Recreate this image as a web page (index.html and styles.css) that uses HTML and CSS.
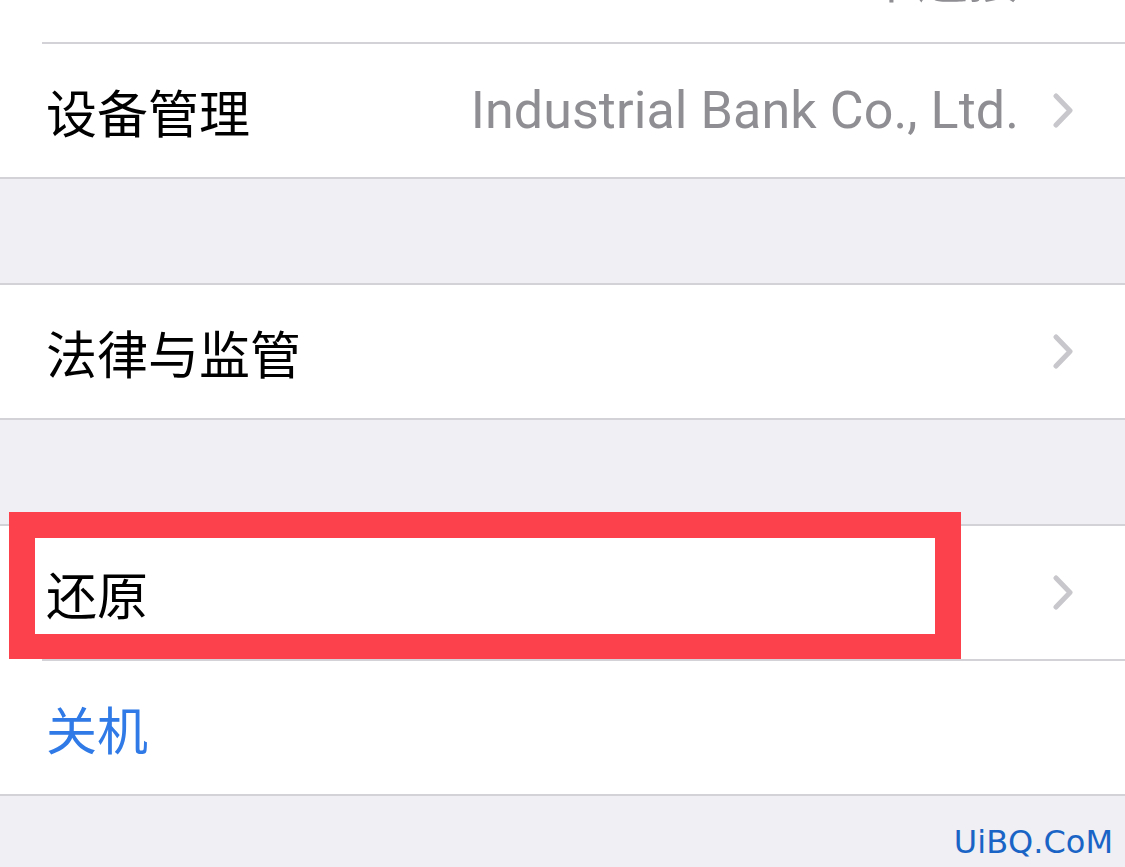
FILE: index.html
```html
<!DOCTYPE html>
<html lang="zh-CN">
<head>
    <meta charset="UTF-8">
    <meta name="viewport" content="width=device-width, initial-scale=1.0">
    <title>通用</title>
    <link rel="stylesheet" href="styles.css">
</head>
<body>
    <div class="screen">
        <!-- Device group -->
        <div class="group group-top-cut">
            <div class="row">
                <span class="label">VPN</span>
                <span class="detail">未连接</span>
                <svg class="chevron" viewBox="0 0 20 35"><polyline points="3 3 17 17.5 3 32"></polyline></svg>
            </div>
            <div class="row">
                <span class="label">设备管理</span>
                <span class="detail latin">Industrial Bank Co., Ltd.</span>
                <svg class="chevron" viewBox="0 0 20 35"><polyline points="3 3 17 17.5 3 32"></polyline></svg>
            </div>
        </div>

        <div class="gap"></div>

        <div class="group">
            <div class="row">
                <span class="label">法律与监管</span>
                <svg class="chevron" viewBox="0 0 20 35"><polyline points="3 3 17 17.5 3 32"></polyline></svg>
            </div>
        </div>

        <div class="gap"></div>

        <div class="group">
            <div class="row">
                <span class="label">还原</span>
                <svg class="chevron" viewBox="0 0 20 35"><polyline points="3 3 17 17.5 3 32"></polyline></svg>
                <!-- Annotation box -->
                <div class="highlight-box"></div>
            </div>
            <div class="row">
                <span class="label action">关机</span>
            </div>
        </div>

        <div class="footer">
            <span class="watermark">UiBQ.CoM</span>
        </div>
    </div>
</body>
</html>
```

FILE: styles.css
```css
body {
  margin: 0;
  padding: 0;
  background-color: #efeff4;
  font-family: 'Noto Sans CJK SC', 'Noto Sans', sans-serif;
  overflow: hidden;
}

.screen {
  width: 1125px;
  height: 867px;
  overflow: hidden;
  display: flex;
  flex-direction: column;
}

.group {
  background-color: #ffffff;
  border-top: 2px solid #d3d2d7;
  border-bottom: 2px solid #d3d2d7;
}

.group-top-cut {
  margin-top: -93px;
}

.row {
  position: relative;
  height: 133px;
  display: flex;
  align-items: center;
  padding: 0 52px 0 46px;
}

/* inset separator between rows */
.row + .row {
  border-top: 2px solid transparent;
  background-image: linear-gradient(#d3d2d7, #d3d2d7);
  background-size: calc(100% - 42px) 2px;
  background-position: 42px 0;
  background-repeat: no-repeat;
  background-origin: border-box;
}

.label {
  font-size: 51px;
  color: #000000;
  flex: 1;
}

.label.action {
  color: #2f7ae6;
}

.detail {
  font-size: 51px;
  color: #8e8e93;
  margin-right: 34px;
}

.detail.latin {
  font-family: 'Roboto', 'Liberation Sans', sans-serif;
  font-size: 52px;
  letter-spacing: 0.1px;
}

.chevron {
  width: 20px;
  height: 35px;
  fill: none;
  stroke: #c7c7cc;
  stroke-width: 5;
  stroke-linecap: round;
  stroke-linejoin: round;
}

.gap {
  height: 104px;
}

.highlight-box {
  position: absolute;
  left: 9px;
  top: -14px;
  width: 952px;
  height: 147px;
  box-sizing: border-box;
  border: 26px solid #fc404c;
  border-bottom-width: 25px;
}

.footer {
  flex: 1;
  display: flex;
  justify-content: flex-end;
  align-items: flex-end;
  padding: 0 12px 6px 0;
}

.watermark {
  font-family: 'DejaVu Sans', sans-serif;
  font-size: 32px;
  color: #1a64c6;
}
```
